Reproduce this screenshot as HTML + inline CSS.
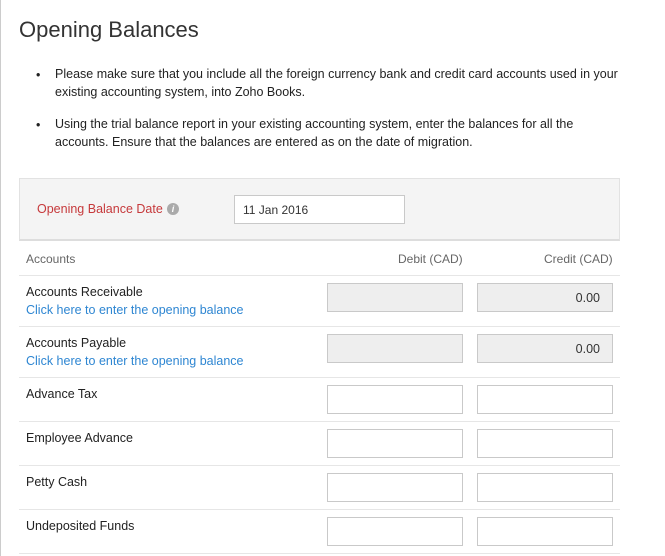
<!DOCTYPE html><html><head><style>
body{margin:0;width:665px;height:556px;overflow:hidden;background:#fff;font-family:"Liberation Sans",sans-serif;color:#222;position:relative}
.a{position:absolute}
.t{font-size:12.5px;white-space:nowrap}
.in{position:absolute;box-sizing:border-box;border:1px solid #c9c9c9;background:#fff;height:29px;font-size:12.5px;text-align:right;padding:7px 12px 0 0;color:#333}
.g{background:#eee}
.hr{position:absolute;left:19px;width:601px;height:1px;background:#e6e6e6}
.lk{color:#2e86d2}
</style></head><body>
<div class="a" style="left:0;top:0;width:1px;height:556px;background:#ccc"></div>
<div class="a" style="left:19px;top:17px;font-size:22px;color:#333">Opening Balances</div>
<div class="a t" style="left:36px;top:66px;line-height:18px">•</div>
<div class="a t" style="left:55px;top:65px;line-height:18px">Please make sure that you include all the foreign currency bank and credit card accounts used in your<br>existing accounting system, into Zoho Books.</div>
<div class="a t" style="left:36px;top:116px;line-height:18px">•</div>
<div class="a t" style="left:55px;top:115px;line-height:18px">Using the trial balance report in your existing accounting system, enter the balances for all the<br>accounts. Ensure that the balances are entered as on the date of migration.</div>
<div class="a" style="left:19px;top:178px;width:601px;height:63px;box-sizing:border-box;background:#f4f4f4;border:1px solid #e2e2e2;border-bottom:2px solid #ddd"></div>
<div class="a t" style="left:37px;top:202px;color:#c6393b">Opening Balance Date</div>
<div class="a" style="left:167px;top:203px;width:12px;height:12px;border-radius:50%;background:#aaa;color:#fff;font-size:9px;font-style:italic;font-weight:bold;text-align:center;line-height:12px">i</div>
<div class="in" style="left:234px;top:195px;width:171px;text-align:left;padding-left:8px;font-size:12px">11 Jan 2016</div>
<div class="a t" style="left:26px;top:252px;color:#666;font-size:12px">Accounts</div>
<div class="a t" style="left:398px;top:252px;color:#666;font-size:12px">Debit (CAD)</div>
<div class="a t" style="left:544px;top:252px;color:#666;font-size:12px">Credit (CAD)</div>
<div class="hr" style="top:275px"></div>
<div class="a t" style="left:26px;top:285px">Accounts Receivable</div>
<div class="a t lk" style="left:26px;top:303px">Click here to enter the opening balance</div>
<div class="in g" style="left:327px;top:283px;width:136px"></div>
<div class="in g" style="left:477px;top:283px;width:136px">0.00</div>
<div class="hr" style="top:326px"></div>
<div class="a t" style="left:26px;top:336px">Accounts Payable</div>
<div class="a t lk" style="left:26px;top:354px">Click here to enter the opening balance</div>
<div class="in g" style="left:327px;top:334px;width:136px"></div>
<div class="in g" style="left:477px;top:334px;width:136px">0.00</div>
<div class="hr" style="top:377px"></div>
<div class="a t" style="left:26px;top:387px">Advance Tax</div>
<div class="in" style="left:327px;top:385px;width:136px"></div>
<div class="in" style="left:477px;top:385px;width:136px"></div>
<div class="hr" style="top:421px"></div>
<div class="a t" style="left:26px;top:431px">Employee Advance</div>
<div class="in" style="left:327px;top:429px;width:136px"></div>
<div class="in" style="left:477px;top:429px;width:136px"></div>
<div class="hr" style="top:465px"></div>
<div class="a t" style="left:26px;top:475px">Petty Cash</div>
<div class="in" style="left:327px;top:473px;width:136px"></div>
<div class="in" style="left:477px;top:473px;width:136px"></div>
<div class="hr" style="top:509px"></div>
<div class="a t" style="left:26px;top:519px">Undeposited Funds</div>
<div class="in" style="left:327px;top:517px;width:136px"></div>
<div class="in" style="left:477px;top:517px;width:136px"></div>
<div class="hr" style="top:553px"></div>
</body></html>
